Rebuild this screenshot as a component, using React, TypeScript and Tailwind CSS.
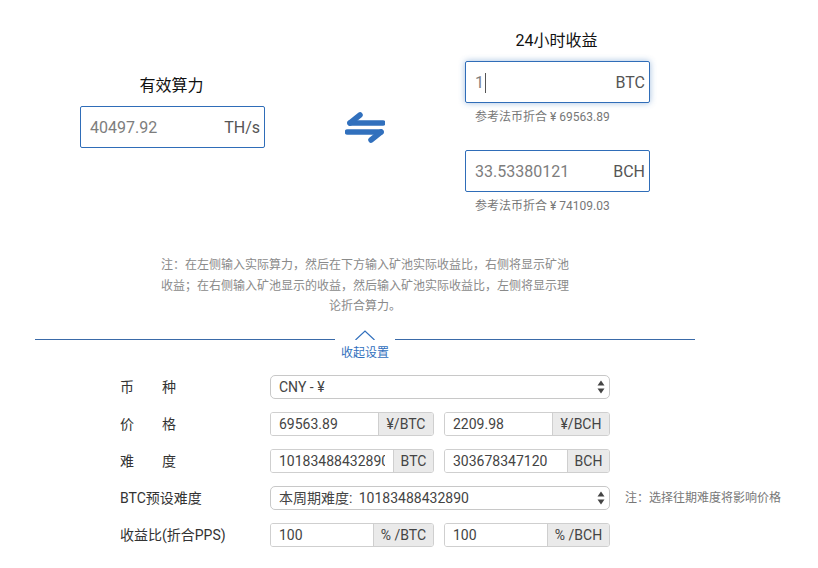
import type { ReactNode } from "react";

const FONT = "font-['Roboto','Noto_Sans_CJK_SC',sans-serif]";

const NOTE =
  "\u6CE8\uFF1A\u5728\u5DE6\u4FA7\u8F93\u5165\u5B9E\u9645\u7B97\u529B\uFF0C\u7136\u540E\u5728\u4E0B\u65B9\u8F93\u5165\u77FF\u6C60\u5B9E\u9645\u6536\u76CA\u6BD4\uFF0C\u53F3\u4FA7\u5C06\u663E\u793A\u77FF\u6C60\u6536\u76CA\uFF1B\u5728\u53F3\u4FA7\u8F93\u5165\u77FF\u6C60\u663E\u793A\u7684\u6536\u76CA\uFF0C\u7136\u540E\u8F93\u5165\u77FF\u6C60\u5B9E\u9645\u6536\u76CA\u6BD4\uFF0C\u5DE6\u4FA7\u5C06\u663E\u793A\u7406\u8BBA\u6298\u5408\u7B97\u529B\u3002";

function BigField({ value, unit, focused, caret }: { value: string; unit: string; focused?: boolean; caret?: boolean }) {
  return (
    <div
      className={`flex h-[42px] w-[185px] items-center justify-between rounded-[2px] border border-[#2f6db8] pl-[9px] pr-[4px] pt-px text-[16px] ${
        focused ? "shadow-[0_0_6px_rgba(47,109,184,0.45)]" : ""
      }`}
    >
      <span className="flex items-center text-[#7d7d7d]">
        {value}
        {caret && <span className="ml-[1px] h-[20px] w-px bg-[#555]" />}
      </span>
      <span className="text-[#555]">{unit}</span>
    </div>
  );
}

function Label({ children }: { children: ReactNode }) {
  return <div className="w-[150px] shrink-0 pt-px text-[14px] text-[#333]">{children}</div>;
}

function SpacedLabel({ a, b }: { a: string; b: string }) {
  return (
    <div className="flex w-[150px] shrink-0 pt-px text-[14px] text-[#333]">
      <span className="w-[42px]">{a}</span>
      <span>{b}</span>
    </div>
  );
}

function Select({ value }: { value: string }) {
  return (
    <div className="relative h-[24px] w-[340px]">
      <select
        value={value}
        onChange={() => {}}
        className="h-full w-full appearance-none rounded-[5px] border border-[#c8c8c8] bg-white pl-[8px] pt-px text-[14px] text-[#444] outline-none"
      >
        <option>{value}</option>
      </select>
      <svg viewBox="0 0 8 14" className="pointer-events-none absolute right-[5px] top-[5px] h-[14px] w-[8px] fill-[#444]">
        <path d="M4 0.5 7.5 5.5H0.5Z" />
        <path d="M4 13.5 7.5 8.5H0.5Z" />
      </svg>
    </div>
  );
}

function AddOn({ value, unit, unitW, w }: { value: string; unit: string; unitW: number; w: number }) {
  return (
    <div className="flex h-[24px] overflow-hidden rounded-[3px] border border-[#cfcfcf]" style={{ width: w }}>
      <input
        readOnly
        value={value}
        className="w-0 min-w-0 flex-1 bg-white pl-[8px] pr-[8px] pt-px text-[14px] text-[#444] outline-none"
      />
      <div
        className="flex shrink-0 items-center justify-center border-l border-[#cfcfcf] bg-[#eaeaea] pt-px text-[14px] text-[#444]"
        style={{ width: unitW }}
      >
        {unit}
      </div>
    </div>
  );
}

function Row({ label, children, note }: { label: ReactNode; children: ReactNode; note?: string }) {
  return (
    <div className="flex h-[24px] items-center">
      {label}
      <div className="flex w-[340px] shrink-0 justify-between">{children}</div>
      {note && <div className="ml-[15px] whitespace-nowrap text-[12px] text-[#777]">{note}</div>}
    </div>
  );
}

export default function App() {
  return (
    <div className={`h-[568px] w-[818px] overflow-hidden bg-white ${FONT}`}>
      <div className="flex pt-[30px]">
        <div className="ml-[80px] mt-[45px] flex w-[185px] flex-col items-center">
          <div className="mb-[10px] pr-[2px] text-[16px] leading-[21px] text-[#111]">有效算力</div>
          <BigField value="40497.92" unit="TH/s" />
        </div>
        <div className="ml-[80px] mt-[80px] h-[34px] w-[40px]">
          <svg viewBox="0 0 40 34" className="h-[34px] w-[40px]" fill="none" stroke="#3170bd" strokeWidth="5.5" strokeLinecap="round" strokeLinejoin="round">
            <path d="M5 13H38" />
            <path d="M5 13 15 5" />
            <path d="M2.5 22H36" />
            <path d="M36 22 26 30" />
          </svg>
        </div>
        <div className="ml-[80px] flex w-[185px] flex-col">
          <div className="mb-[10px] pr-[2px] text-center text-[16px] leading-[21px] text-[#111]">24小时收益</div>
          <BigField value="1" unit="BTC" focused caret />
          <div className="ml-[10px] mt-[6px] text-[12px] leading-[16px] text-[#777]">参考法币折合 ¥ 69563.89</div>
          <div className="mt-[25px]">
            <BigField value="33.53380121" unit="BCH" />
          </div>
          <div className="ml-[10px] mt-[6px] text-[12px] leading-[16px] text-[#777]">参考法币折合 ¥ 74109.03</div>
        </div>
      </div>

      <div className="ml-[160px] mt-[41px] w-[410px] text-center text-[12px] leading-[20.5px] text-[#8a8a8a]">
        {NOTE}
      </div>

      <div className="ml-[35px] mt-[13px] flex w-[660px] items-start">
        <div className="mt-[9px] h-px flex-1 bg-[#3a6aa8]" />
        <div className="flex w-[60px] flex-col items-center text-[#3170bd]">
          <svg viewBox="0 0 20 10" className="h-[10px] w-[20px]" fill="none" stroke="#3170bd" strokeWidth="1.2">
            <path d="M0.5 10 10 1 19.5 10" />
          </svg>
          <div className="mt-[5px] text-[12px] leading-[16px]">收起设置</div>
        </div>
        <div className="mt-[9px] h-px flex-1 bg-[#3a6aa8]" />
      </div>

      <div className="ml-[120px] mt-[14px] flex flex-col gap-[13px]">
        <Row label={<SpacedLabel a="币" b="种" />}>
          <Select value="CNY - ¥" />
        </Row>
        <Row label={<SpacedLabel a="价" b="格" />}>
          <AddOn value="69563.89" unit="¥/BTC" unitW={55} w={164} />
          <AddOn value="2209.98" unit="¥/BCH" unitW={57} w={166} />
        </Row>
        <Row label={<SpacedLabel a="难" b="度" />}>
          <AddOn value="10183488432890" unit="BTC" unitW={40} w={164} />
          <AddOn value="303678347120" unit="BCH" unitW={42} w={166} />
        </Row>
        <Row label={<Label>BTC预设难度</Label>} note={"\u6CE8\uFF1A\u9009\u62E9\u5F80\u671F\u96BE\u5EA6\u5C06\u5F71\u54CD\u4EF7\u683C"}>
          <Select value={"本周期难度: \u200910183488432890"} />
        </Row>
        <Row label={<Label>收益比(折合PPS)</Label>}>
          <AddOn value="100" unit="% /BTC" unitW={60} w={164} />
          <AddOn value="100" unit="% /BCH" unitW={62} w={166} />
        </Row>
      </div>
    </div>
  );
}
